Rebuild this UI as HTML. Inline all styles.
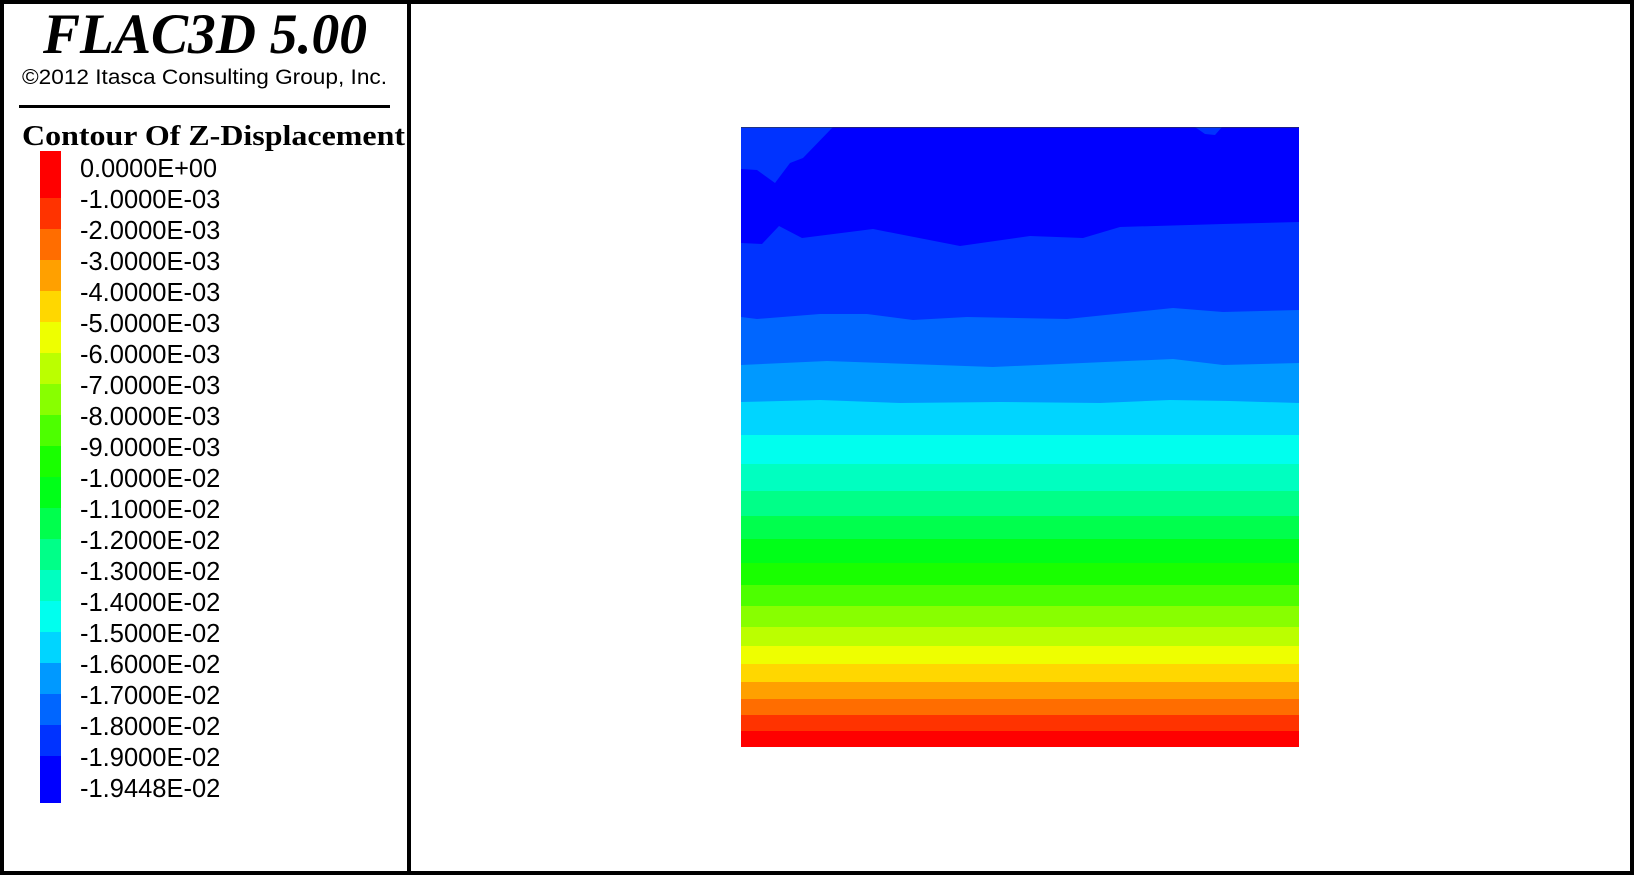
<!DOCTYPE html>
<html><head><meta charset="utf-8"><style>
html,body{margin:0;padding:0;background:#fff;}
svg{display:block;}
</style></head><body>
<svg width="1634" height="875" viewBox="0 0 1634 875" xmlns="http://www.w3.org/2000/svg">
<rect x="0" y="0" width="1634" height="875" fill="#fff"/>
<!-- borders -->
<rect x="2" y="2" width="1630" height="871" fill="none" stroke="#000" stroke-width="4"/>
<rect x="407" y="0" width="4" height="875" fill="#000"/>

<!-- title -->
<text x="43" y="53" font-family="Liberation Serif, serif" font-weight="bold" font-style="italic" font-size="57" textLength="324" lengthAdjust="spacingAndGlyphs">FLAC3D 5.00</text>
<text x="22" y="84" font-family="Liberation Sans, sans-serif" font-size="21.5" textLength="365" lengthAdjust="spacingAndGlyphs">©2012 Itasca Consulting Group, Inc.</text>
<rect x="19" y="105" width="371" height="3" fill="#000"/>
<text x="22" y="145" font-family="Liberation Serif, serif" font-weight="bold" font-size="29" textLength="383" lengthAdjust="spacingAndGlyphs">Contour Of Z-Displacement</text>

<!-- colorbar -->
<g>
<rect x="40" y="151" width="21" height="47" fill="#ff0000"/>
<rect x="40" y="198" width="21" height="31" fill="#ff3300"/>
<rect x="40" y="229" width="21" height="31" fill="#ff6d00"/>
<rect x="40" y="260" width="21" height="31" fill="#ffa000"/>
<rect x="40" y="291" width="21" height="31" fill="#ffd700"/>
<rect x="40" y="322" width="21" height="31" fill="#eeff00"/>
<rect x="40" y="353" width="21" height="31" fill="#bbff00"/>
<rect x="40" y="384" width="21" height="31" fill="#88ff00"/>
<rect x="40" y="415" width="21" height="31" fill="#4dff00"/>
<rect x="40" y="446" width="21" height="31" fill="#19ff00"/>
<rect x="40" y="477" width="21" height="31" fill="#00ff18"/>
<rect x="40" y="508" width="21" height="31" fill="#00ff4d"/>
<rect x="40" y="539" width="21" height="31" fill="#00ff88"/>
<rect x="40" y="570" width="21" height="31" fill="#00ffc0"/>
<rect x="40" y="601" width="21" height="31" fill="#00ffee"/>
<rect x="40" y="632" width="21" height="31" fill="#00d5ff"/>
<rect x="40" y="663" width="21" height="31" fill="#0099ff"/>
<rect x="40" y="694" width="21" height="31" fill="#0066ff"/>
<rect x="40" y="725" width="21" height="31" fill="#0033ff"/>
<rect x="40" y="756" width="21" height="47" fill="#0000ff"/>
</g>
<g font-family="Liberation Sans, sans-serif" font-size="25.5">
<text x="80" y="177" textLength="137" lengthAdjust="spacingAndGlyphs">0.0000E+00</text>
<text x="80" y="208">-1.0000E-03</text>
<text x="80" y="239">-2.0000E-03</text>
<text x="80" y="270">-3.0000E-03</text>
<text x="80" y="301">-4.0000E-03</text>
<text x="80" y="332">-5.0000E-03</text>
<text x="80" y="363">-6.0000E-03</text>
<text x="80" y="394">-7.0000E-03</text>
<text x="80" y="425">-8.0000E-03</text>
<text x="80" y="456">-9.0000E-03</text>
<text x="80" y="487">-1.0000E-02</text>
<text x="80" y="518">-1.1000E-02</text>
<text x="80" y="549">-1.2000E-02</text>
<text x="80" y="580">-1.3000E-02</text>
<text x="80" y="611">-1.4000E-02</text>
<text x="80" y="642">-1.5000E-02</text>
<text x="80" y="673">-1.6000E-02</text>
<text x="80" y="704">-1.7000E-02</text>
<text x="80" y="735">-1.8000E-02</text>
<text x="80" y="766">-1.9000E-02</text>
<text x="80" y="797">-1.9448E-02</text>
</g>

<!-- contour plot -->
<g>
<rect x="741" y="127" width="558" height="620" fill="#0000ff"/>
<polygon fill="#0033ff" points="741,127 833,127 803,158 790,163 775,183 757,170 741,169"/>
<polygon fill="#0033ff" points="1195,127 1222,127 1215,135 1205,134"/>
<polygon fill="#0033ff" points="741,243 762,244 779,226 802,238 873,229 960,246 1030,236 1083,238 1120,227 1223,224 1299,222 1299,747 741,747"/>
<polygon fill="#0066ff" points="741,317 757,319 820,314 867,314 913,320 967,317 1067,319 1173,308 1223,312 1299,310 1299,747 741,747"/>
<polygon fill="#0099ff" points="741,365 827,361 993,367 1173,359 1223,365 1299,363 1299,747 741,747"/>
<polygon fill="#00d5ff" points="741,402 820,400 900,403 1000,402 1100,403 1170,400 1230,401 1299,403 1299,747 741,747"/>
<rect x="741" y="435" width="558" height="312" fill="#00ffee"/>
<rect x="741" y="464" width="558" height="283" fill="#00ffc0"/>
<rect x="741" y="491" width="558" height="256" fill="#00ff88"/>
<rect x="741" y="516" width="558" height="231" fill="#00ff4d"/>
<rect x="741" y="539" width="558" height="208" fill="#00ff18"/>
<rect x="741" y="563" width="558" height="184" fill="#19ff00"/>
<rect x="741" y="585" width="558" height="162" fill="#4dff00"/>
<rect x="741" y="606" width="558" height="141" fill="#88ff00"/>
<rect x="741" y="627" width="558" height="120" fill="#bbff00"/>
<rect x="741" y="646" width="558" height="101" fill="#eeff00"/>
<rect x="741" y="664" width="558" height="83" fill="#ffd700"/>
<rect x="741" y="682" width="558" height="65" fill="#ffa000"/>
<rect x="741" y="699" width="558" height="48" fill="#ff6d00"/>
<rect x="741" y="715" width="558" height="32" fill="#ff3300"/>
<rect x="741" y="731" width="558" height="16" fill="#ff0000"/>
<rect x="741" y="127" width="558" height="1" fill="#333" opacity="0.6"/>
</g>
</svg>
</body></html>
